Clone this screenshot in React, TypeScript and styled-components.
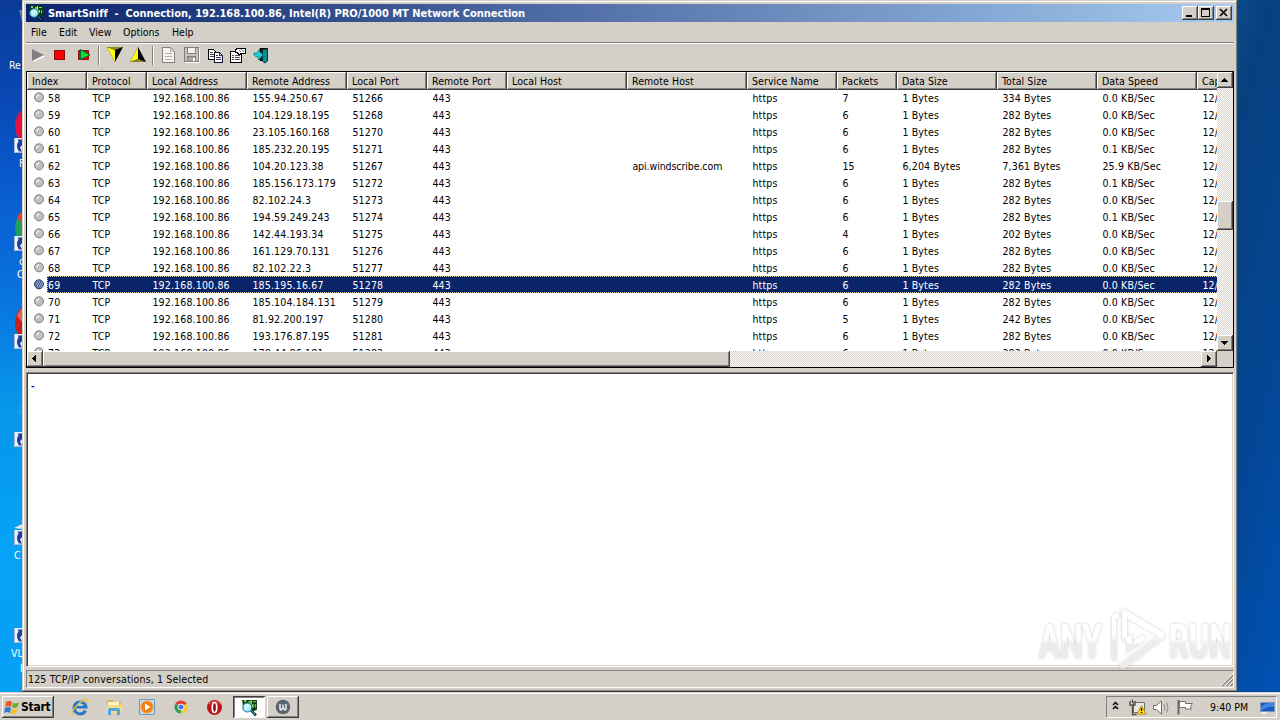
import * as React from 'react';
import styled, { createGlobalStyle, css } from 'styled-components';

const face = '#d4d0c8';
const dark = '#404040';
const shadow = '#808080';

const GlobalStyle = createGlobalStyle`
  * {
    box-sizing: border-box;
  }
  body {
    margin: 0;
    overflow: hidden;
    font-family: 'DejaVu Sans Condensed', 'DejaVu Sans', sans-serif;
    font-stretch: condensed;
    font-size: 10.5px;
    color: #000;
  }
  svg {
    display: block;
    flex: none;
  }
`;

const raised = css`
  background: ${face};
  box-shadow: inset -1px -1px ${dark}, inset 1px 1px #fff, inset -2px -2px ${shadow};
`;

const Screen = styled.div`
  display: flex;
  flex-direction: column;
  width: 1280px;
  height: 720px;
  overflow: hidden;
`;

const Desktop = styled.div`
  display: flex;
  height: 692px;
`;

const LeftStrip = styled.div`
  position: relative;
  width: 22px;
  overflow: hidden;
  background: linear-gradient(#0a3b98, #0a48b4 14%, #0858cc 25%, #0872de 42%, #0795ea 58%, #05a2f6 78%, #06a0f6);
`;

const RightStrip = styled.div`
  flex: 1;
  background: linear-gradient(105deg, #0c4a88, #07407f 14%, #044592 55%, #0052b6);
`;

const DesktopLabel = styled.span<{ $x: number; $y: number }>`
  position: absolute;
  left: ${(p) => p.$x}px;
  top: ${(p) => p.$y}px;
  line-height: 12px;
  color: #fff;
  white-space: nowrap;
`;

const DesktopArt = styled.svg`
  position: absolute;
  left: 0;
  top: 0;
`;

const Window = styled.div`
  display: flex;
  flex-direction: column;
  width: 1216px;
  height: 692px;
  padding: 4px;
  background: ${face};
  box-shadow: inset -1px -1px ${dark}, inset 1px 1px ${face}, inset -2px -2px ${shadow}, inset 2px 2px #fff;
`;

const TitleBar = styled.div`
  display: flex;
  align-items: center;
  height: 18px;
  padding: 0 2px;
  background: linear-gradient(90deg, #0a246a, #a6caf0);
  color: #fff;
`;

const Title = styled.div`
  flex: 1;
  padding-left: 4px;
  font-size: 11px;
  font-weight: bold;
  white-space: pre;
  letter-spacing: -0.02px;
`;

const CaptionButton = styled.div<{ $gap?: boolean }>`
  width: 16px;
  height: 14px;
  margin-left: ${(p) => (p.$gap ? 2 : 0)}px;
  ${raised}
`;

const MenuBar = styled.div`
  display: flex;
  align-items: center;
  height: 21px;
  border-bottom: 1px solid ${shadow};
`;

const MenuItem = styled.div<{ $width: number }>`
  width: ${(p) => p.$width}px;
  padding-left: 5px;
`;

const ToolBar = styled.div`
  display: flex;
  height: 28px;
  padding-top: 2px;
  border-top: 1px solid #fff;
`;

const Tool = styled.div`
  display: flex;
  justify-content: center;
  width: 23px;
  height: 20px;
  margin-right: 0.4px;
`;

const ToolSeparator = styled.div`
  width: 2px;
  height: 19px;
  margin: 0 3px 0 2px;
  border-left: 1px solid ${shadow};
  border-right: 1px solid #fff;
`;

const ListFrame = styled.div`
  display: grid;
  grid-template-columns: 1190px 16px;
  grid-template-rows: 279px 16px;
  height: 297px;
  border: 1px solid #000;
`;

const ListBody = styled.div`
  overflow: hidden;
  background: #fff;
`;

const columnWidths = '60px 60px 100px 100px 80px 80px 120px 120px 90px 60px 100px 100px 100px 100px';

const HeaderRow = styled.div`
  display: grid;
  grid-template-columns: ${columnWidths};
  width: 1270px;
  height: 17px;
`;

const HeaderCell = styled.div`
  padding-left: 5px;
  line-height: 18px;
  letter-spacing: 0.08px;
  white-space: nowrap;
  ${raised}
`;

const Row = styled.div<{ $selected: boolean }>`
  position: relative;
  display: grid;
  grid-template-columns: ${columnWidths};
  width: 1270px;
  height: 17px;
  line-height: 19px;
  letter-spacing: 0.16px;
  ${(p) =>
    p.$selected &&
    css`
      color: #fff;
      background: linear-gradient(90deg, #fff 20px, #0a246a 20px);
      &::after {
        content: '';
        position: absolute;
        inset: 0 0 0 20px;
        border: 1px dotted #d8cfa0;
      }
    `}
`;

const Cell = styled.div<{ $tight?: boolean }>`
  padding-left: 5.4px;
  white-space: nowrap;
  letter-spacing: ${(p) => (p.$tight ? '-0.08px' : 'inherit')};
`;

const IndexCell = styled.div`
  display: flex;
  gap: 4px;
  padding-left: 6px;
`;

const Track = styled.div<{ $vertical?: boolean }>`
  display: flex;
  flex-direction: ${(p) => (p.$vertical ? 'column' : 'row')};
  background: repeating-conic-gradient(#fff 0 25%, ${face} 0 50%) 0 0 / 2px 2px;
`;

const ArrowButton = styled.div`
  flex: none;
  width: 16px;
  height: 16px;
  ${raised}
`;

const Gap = styled.div<{ $size: number }>`
  flex: 0 0 ${(p) => p.$size}px;
`;

const Thumb = styled.div<{ $size: number }>`
  flex: 0 0 ${(p) => p.$size}px;
  ${raised}
`;

const Corner = styled.div`
  background: ${face};
`;

const TextPane = styled.div`
  position: relative;
  height: 295px;
  margin-top: 4px;
  padding: 6px 0 0 4px;
  border: 1px solid;
  border-color: ${shadow} #fff #fff ${shadow};
  background: #fff;
  box-shadow: inset 1px 1px ${dark}, inset -1px -1px ${face};
  color: #0000c8;
  font: bold 11px/13px 'Liberation Sans', sans-serif;
`;

const Watermark = styled.svg`
  position: absolute;
  right: 0;
  top: 230px;
`;

const StatusBar = styled.div`
  display: flex;
  align-items: center;
  justify-content: space-between;
  height: 18px;
  margin-top: 3px;
  padding-left: 1px;
  letter-spacing: 0.15px;
  border: 1px solid;
  border-color: ${shadow} #fff #fff ${shadow};
`;

const TaskBar = styled.div`
  display: flex;
  align-items: center;
  height: 28px;
  padding: 2px 3px 0 2px;
  background: ${face};
  box-shadow: inset 0 1px ${face}, inset 0 2px #fff;
`;

const StartButton = styled.div`
  display: flex;
  align-items: center;
  gap: 1px;
  width: 52px;
  height: 22px;
  padding-left: 2px;
  font-size: 12px;
  font-weight: bold;
  letter-spacing: -0.25px;
  ${raised}
`;

const QuickLaunch = styled.div`
  display: flex;
  gap: 13.7px;
  width: 179px;
  padding-left: 16px;
`;

const TaskButton = styled.div<{ $active?: boolean }>`
  display: flex;
  align-items: center;
  justify-content: center;
  width: 32px;
  height: 22px;
  margin-right: 2px;
  ${raised}
  ${(p) =>
    p.$active &&
    css`
      background: #fff;
      box-shadow: inset 1px 1px ${dark}, inset -1px -1px #fff, inset 2px 2px ${shadow};
    `}
`;

const Tray = styled.div`
  display: flex;
  align-items: center;
  width: 171px;
  height: 22px;
  margin-left: auto;
  border: 1px solid;
  border-color: ${shadow} #fff #fff ${shadow};
`;

const TrayIcons = styled.svg`
  width: 92px;
  height: 20px;
`;

const Clock = styled.div`
  width: 49px;
  margin-left: 11px;
  font-size: 10.5px;
  white-space: nowrap;
`;

const headers = [
  'Index', 'Protocol', 'Local Address', 'Remote Address', 'Local Port', 'Remote Port', 'Local Host',
  'Remote Host', 'Service Name', 'Packets', 'Data Size', 'Total Size', 'Data Speed', 'Capture Time',
];

interface Conversation {
  index: number;
  remote: string;
  port: number;
  host?: string;
  packets: number;
  data?: string;
  total: string;
  speed: string;
}

const conversations: Conversation[] = [
  { index: 58, remote: '155.94.250.67', port: 51266, packets: 7, total: '334', speed: '0.0' },
  { index: 59, remote: '104.129.18.195', port: 51268, packets: 6, total: '282', speed: '0.0' },
  { index: 60, remote: '23.105.160.168', port: 51270, packets: 6, total: '282', speed: '0.0' },
  { index: 61, remote: '185.232.20.195', port: 51271, packets: 6, total: '282', speed: '0.1' },
  {
    index: 62, remote: '104.20.123.38', port: 51267, host: 'api.windscribe.com',
    packets: 15, data: '6,204', total: '7,361', speed: '25.9',
  },
  { index: 63, remote: '185.156.173.179', port: 51272, packets: 6, total: '282', speed: '0.1' },
  { index: 64, remote: '82.102.24.3', port: 51273, packets: 6, total: '282', speed: '0.0' },
  { index: 65, remote: '194.59.249.243', port: 51274, packets: 6, total: '282', speed: '0.1' },
  { index: 66, remote: '142.44.193.34', port: 51275, packets: 4, total: '202', speed: '0.0' },
  { index: 67, remote: '161.129.70.131', port: 51276, packets: 6, total: '282', speed: '0.0' },
  { index: 68, remote: '82.102.22.3', port: 51277, packets: 6, total: '282', speed: '0.0' },
  { index: 69, remote: '185.195.16.67', port: 51278, packets: 6, total: '282', speed: '0.0' },
  { index: 70, remote: '185.104.184.131', port: 51279, packets: 6, total: '282', speed: '0.0' },
  { index: 71, remote: '81.92.200.197', port: 51280, packets: 5, total: '242', speed: '0.0' },
  { index: 72, remote: '193.176.87.195', port: 51281, packets: 6, total: '282', speed: '0.0' },
  { index: 73, remote: '178.44.86.181', port: 51282, packets: 6, total: '282', speed: '0.0' },
];

function Arrow({ d }: { d: string }) {
  return (
    <ArrowButton>
      <svg width="16" height="16" shapeRendering="crispEdges">
        <path d={d} fill="#000" />
      </svg>
    </ArrowButton>
  );
}

function Bullet({ selected }: { selected: boolean }) {
  return (
    <svg width="11" height="17" viewBox="0 0 11 17">
      <circle cx="6" cy="8.300" r="4.500" fill={selected ? '#8c9cc0' : '#c0c0c0'} stroke={selected ? '#26386c' : '#808080'} />
      {selected ? (
        <path
          d="M3 6h6M2 8h8M3 10h6M4 12h4"
          fill="none"
          stroke="#142c6e"
          strokeDasharray="1 1"
        />
      ) : (
        <path d="M3.500 8.300L6 5.500" stroke="#ececec" strokeWidth="1.500" />
      )}
    </svg>
  );
}

function SniffIcon({ size = 16 }: { size?: number }) {
  return (
    <svg width={size} height={size} viewBox="0 0 16 16">
      <path d="M1 1h14v9l-2 1H9L2 8z" fill="#0a3c14" />
      <path d="M3 1h2v2H3zM7 2h2v2H7zM11 2h3v1h-3zM10 5h2v3h-2zM13 5h1v3h-1z" fill="#7ce04c" />
      <path d="M9 1h1v4H9z" fill="#e8e070" />
      <path d="M9.500 10.500l4.500 5" stroke="#000" strokeWidth="2.400" />
      <path d="M9.800 10.800l3.700 4.200" stroke="#40b8d0" strokeWidth="1" />
      <circle cx="6" cy="8" r="4.300" fill="#a8eefa" stroke="#16748c" />
      <path d="M3.800 7l3-2M4 9.500l4-3" stroke="#fff" />
    </svg>
  );
}

function ShortcutBadge({ y }: { y: number }) {
  return (
    <g transform={`translate(14 ${y})`}>
      <path d="M0 0h14v15H0z" fill="#e9f1fa" />
      <path d="M.5 0v14.500H8" fill="none" stroke="#a9b8cc" />
      <path d="M8 1.500H3.500l1.200 1.800C2.400 6 2.500 10 5 13.500h3L6 9.500 8 7z" fill="#1c3f9c" />
    </g>
  );
}

function DesktopIcons() {
  return (
    <LeftStrip>
      <DesktopArt width="22" height="692">
        <path d="M19 10h3v12z" fill="#8a9ab4" opacity=".7" />
        <ellipse cx="31" cy="126" rx="16" ry="19" fill="#e8103c" />
        <ellipse cx="31" cy="228" rx="16" ry="17" fill="#24a05a" />
        <path d="M17 218q2-5 5-7v11z" fill="#e04030" />
        <ellipse cx="31" cy="323" rx="16" ry="19" fill="#c8201c" />
        <path d="M17 316q2-5 5-8v14z" fill="#e86050" />
        <path d="M16 414q3-8 6-10v10z" fill="#1eb4ee" opacity=".3" />
        <path d="M14 528l8-4v5z" fill="#e6e6e6" />
        {[138, 236, 334, 432, 530, 628].map((y) => (
          <ShortcutBadge key={y} y={y} />
        ))}
      </DesktopArt>
      <DesktopLabel $x={9} $y={59}>Re</DesktopLabel>
      <DesktopLabel $x={19} $y={157}>F</DesktopLabel>
      <DesktopLabel $x={19} $y={255}>c</DesktopLabel>
      <DesktopLabel $x={17} $y={268}>C</DesktopLabel>
      <DesktopLabel $x={14} $y={549}>C</DesktopLabel>
      <DesktopLabel $x={11} $y={647}>VL</DesktopLabel>
      <DesktopLabel $x={20} $y={662}>l</DesktopLabel>
    </LeftStrip>
  );
}

function Tools() {
  return (
    <ToolBar>
      <Tool>
        <svg width="18" height="18">
          <path d="M4 4l12 6.500L4 16z" fill="#fff" />
          <path d="M3 3l12 6-12 6z" fill="#808080" />
        </svg>
      </Tool>
      <Tool>
        <svg width="18" height="18" shapeRendering="crispEdges">
          <path d="M2.500 4.500h10v9h-10z" fill="#f00" stroke="#8c1010" />
        </svg>
      </Tool>
      <Tool>
        <svg width="18" height="18">
          <path d="M3.500 4.500h10v9h-10z" fill="#e00" stroke="#8c1010" />
          <path d="M5.500 3.500l9.500 5.500-9.500 4.500z" fill="#10e030" stroke="#063" />
        </svg>
      </Tool>
      <ToolSeparator />
      <Tool>
        <svg width="20" height="18">
          <path d="M2 1h16l-8 15z" fill="#000" />
          <path d="M2 1l8 3v12z" fill="#ff0" />
          <path d="M2 1h16l-8 3z" fill="#8a8a20" />
        </svg>
      </Tool>
      <Tool>
        <svg width="20" height="18">
          <path d="M2 16h16L10 1z" fill="#000" />
          <path d="M10 1v12l-8 3z" fill="#ff0" />
          <path d="M2 16h16l-8-3z" fill="#8a8a20" />
        </svg>
      </Tool>
      <ToolSeparator />
      <Tool>
        <svg width="16" height="18" shapeRendering="crispEdges">
          <path d="M2.500 1.500h8l4 4v11h-12z" fill="#f6f4f0" stroke="#808080" />
          <path d="M10.500 1.500v4h4M5 7.500h7M5 10.500h7M5 13.500h7" fill="none" stroke="#b4b0a8" />
        </svg>
      </Tool>
      <Tool>
        <svg width="17" height="18" shapeRendering="crispEdges">
          <path d="M1.500 1.500h14v14h-14z" fill="#c8c4bc" stroke="#808080" />
          <path d="M4.500 1.500h8v6h-8z" fill="#f4f2ee" stroke="#808080" />
          <path d="M4.500 10.500h8v5h-8z" fill="#aaa69e" stroke="#808080" />
          <path d="M10 12h2v3h-2z" fill="#fff" />
          <path d="M2 16.500h14.500V2" fill="none" stroke="#fff" />
        </svg>
      </Tool>
      <Tool>
        <svg width="17" height="18" shapeRendering="crispEdges">
          <path d="M1.500 3.500h5l3 3v7h-8z" fill="#fff" stroke="#000" />
          <path d="M3 6.500h3M3 8.500h4M3 10.500h4" stroke="#404040" />
          <path d="M7.500 6.500h5l3 3v7h-8z" fill="#fff" stroke="#101030" />
          <path d="M12.500 6.500v3h3M9 9.500h2M9 11.500h5M9 13.500h5" fill="none" stroke="#303050" />
        </svg>
      </Tool>
      <Tool>
        <svg width="17" height="18" shapeRendering="crispEdges">
          <path d="M.5 5.500h11v11h-11z" fill="#fff" stroke="#000" />
          <path d="M2 9.500h2M5 9.500h5M2 11.500h2M5 11.500h5M2 13.500h2M5 13.500h5" stroke="#505050" />
          <path d="M5 6V4l3-2h7v5h-3l-3 2-2-3z" fill="#fff" stroke="#000" />
          <path d="M11 3l3 3M9 4l2 2" stroke="#808080" />
        </svg>
      </Tool>
      <Tool>
        <svg width="18" height="18">
          <path d="M7 2.500h7.500v12H7z" fill="#202020" stroke="#000" />
          <path d="M9.500 4l5-1v12l-2.500 2-2.500-2z" fill="#108c90" stroke="#033" />
          <path d="M1 7h4V4l5 5-5 5v-3.500H2.500L1 9z" fill="#20d0d0" stroke="#067" strokeWidth=".6" />
        </svg>
      </Tool>
    </ToolBar>
  );
}

function AnyRun() {
  return (
    <Watermark width="200" height="72" viewBox="0 0 200 72">
      <defs>
        <linearGradient id="fade" x1="0" y1="0" x2="0" y2="1">
          <stop offset="0.45" stopColor="#fff" />
          <stop offset="0.55" stopColor="#ececec" />
        </linearGradient>
        <filter id="soft" x="-10%" y="-10%" width="120%" height="120%">
          <feDropShadow dx="0" dy="0" stdDeviation="1.600" floodColor="#000" floodOpacity=".24" />
        </filter>
      </defs>
      <g filter="url(#soft)" fill="url(#fade)" fontFamily="Roboto, sans-serif" fontSize="48">
        <text x="6" y="55" textLength="63" lengthAdjust="spacingAndGlyphs">ANY</text>
        <text x="136" y="55" textLength="62" lengthAdjust="spacingAndGlyphs">RUN</text>
        <path
          d="M79 13l7-4v5l-3 2v42l-4-2zM89 5l42 25v5L92 65a3 3 0 1 1-3-5l36-27-31-18v24l-5-2z"
          fillRule="evenodd"
        />
        <path d="M94 34v16l20-15-5-3-10 8v-9z" />
      </g>
    </Watermark>
  );
}

function Launchers() {
  return (
    <QuickLaunch>
      <svg width="20" height="20" viewBox="0 0 20 20">
        <path d="M15.500 13.500A6 6 0 1 1 16 10H6" fill="none" stroke="#2878c8" strokeWidth="3" />
        <path d="M7 8.500h6" stroke="#8ad4f8" />
        <path d="M2.500 18C0 14 11 2.500 17 2.500c2 0 1 3 0 4" fill="none" stroke="#ecc040" strokeWidth="1.300" />
      </svg>
      <svg width="20" height="20" viewBox="0 0 20 20">
        <path d="M3 3h6l1 2h7v11H3z" fill="#e0b84c" />
        <path d="M4 5h11v4H4z" fill="#fff6c0" />
        <path d="M3 8h15v8H3z" fill="#f4dc84" />
        <path d="M4 18v-5q0-2 2-2h8q2 0 2 2v5h-3v-4H7v4z" fill="#50a8dc" />
      </svg>
      <svg width="20" height="20" viewBox="0 0 20 20">
        <path d="M2.500 2.500h15v15h-15z" fill="#c4dcf0" stroke="#6a9cc8" />
        <circle cx="10" cy="10" r="6.300" fill="#f08010" stroke="#f8b860" />
        <path d="M8 6.500l5.500 3.500L8 13.500z" fill="#fff" />
      </svg>
      <svg width="20" height="20" viewBox="0 0 20 20">
        <path d="M10 10L4.370 6.750A6.500 6.500 0 0 1 15.630 6.750z" fill="#e04030" />
        <path d="M10 10L4.370 6.750A6.500 6.500 0 0 0 10 16.500z" fill="#30a050" />
        <path d="M10 10V16.500A6.500 6.500 0 0 0 15.630 6.750z" fill="#f8cc30" />
        <circle cx="10" cy="10" r="3.300" fill="#fff" />
        <circle cx="10" cy="10" r="2.500" fill="#3c78e0" />
      </svg>
      <svg width="20" height="20" viewBox="0 0 20 20">
        <circle cx="9.500" cy="10.500" r="7.500" fill="#c01418" />
        <path d="M4 7q6-5 11 0" stroke="#e86a60" fill="none" />
        <ellipse cx="9.500" cy="10.500" rx="2.200" ry="5" fill="#901010" stroke="#fff" strokeWidth="1.700" />
      </svg>
    </QuickLaunch>
  );
}

function App() {
  return (
    <Screen>
      <GlobalStyle />
      <Desktop>
        <DesktopIcons />
        <Window>
          <TitleBar>
            <SniffIcon />
            <Title>SmartSniff  -  Connection, 192.168.100.86, Intel(R) PRO/1000 MT Network Connection</Title>
            <CaptionButton>
              <svg width="16" height="14"><path d="M4 9h6v2H4z" /></svg>
            </CaptionButton>
            <CaptionButton>
              <svg width="16" height="14"><path d="M3 2h9v9H3zM4 4v6h7V4z" fillRule="evenodd" /></svg>
            </CaptionButton>
            <CaptionButton $gap>
              <svg width="16" height="14"><path d="M4 3l7 7M11 3l-7 7" stroke="#000" strokeWidth="1.600" /></svg>
            </CaptionButton>
          </TitleBar>
          <MenuBar>
            <MenuItem $width={28}>File</MenuItem>
            <MenuItem $width={30}>Edit</MenuItem>
            <MenuItem $width={34}>View</MenuItem>
            <MenuItem $width={49}>Options</MenuItem>
            <MenuItem $width={40}>Help</MenuItem>
          </MenuBar>
          <Tools />
          <ListFrame>
            <ListBody>
              <HeaderRow>
                {headers.map((h) => (
                  <HeaderCell key={h}>{h}</HeaderCell>
                ))}
              </HeaderRow>
              {conversations.map((c) => (
                <Row key={c.index} $selected={c.index === 69}>
                  <IndexCell>
                    <Bullet selected={c.index === 69} />
                    {c.index}
                  </IndexCell>
                  <Cell>TCP</Cell>
                  <Cell>192.168.100.86</Cell>
                  <Cell>{c.remote}</Cell>
                  <Cell>{c.port}</Cell>
                  <Cell>443</Cell>
                  <Cell />
                  <Cell $tight>{c.host}</Cell>
                  <Cell>https</Cell>
                  <Cell>{c.packets}</Cell>
                  <Cell>{c.data || '1'} Bytes</Cell>
                  <Cell>{c.total} Bytes</Cell>
                  <Cell>{c.speed} KB/Sec</Cell>
                  <Cell>12/</Cell>
                </Row>
              ))}
            </ListBody>
            <Track $vertical>
              <Arrow d="M7 6h1v1h1v1h1v1h1v1H4V9h1V8h1V7h1z" />
              <Gap $size={113} />
              <Thumb $size={29} />
              <Gap $size={105} />
              <Arrow d="M4 6h7v1h-1v1H9v1H8v1H7V9H6V8H5V7H4z" />
            </Track>
            <Track>
              <Arrow d="M9 4v7H8v-1H7V9H6V8H5V7h1V6h1V5h1V4z" />
              <Thumb $size={687} />
              <Gap $size={471} />
              <Arrow d="M6 4h1v1h1v1h1v1h1v1H9v1H8v1H7v1H6z" />
            </Track>
            <Corner />
          </ListFrame>
          <TextPane>
            -
            <AnyRun />
          </TextPane>
          <StatusBar>
            125 TCP/IP conversations, 1 Selected
            <svg width="13" height="15">
              <path d="M2 14L13 3M6 14l7-7M10 14l3-3" stroke="#808080" strokeWidth="1.600" />
              <path d="M1 14L13 2M5 14l8-8M9 14l4-4" stroke="#fff" strokeWidth=".8" />
            </svg>
          </StatusBar>
        </Window>
        <RightStrip />
      </Desktop>
      <TaskBar>
        <StartButton>
          <svg width="16" height="16" viewBox="0 0 16 16">
            <path d="M2 3q3-2 6 0L7 8Q4 6 1 8z" fill="#e85a20" />
            <path d="M9 3.500q3 2 6-.5l-1.500 5q-3 2-5.500 0z" fill="#68b030" />
            <path d="M1 9q3-2 6 0l-1 5q-3-2-6 0z" fill="#3078d0" />
            <path d="M8 9.500q3 2 5.500 0L12 14q-3 2-5 0z" fill="#f8c020" />
          </svg>
          Start
        </StartButton>
        <Launchers />
        <TaskButton $active>
          <SniffIcon size={17} />
        </TaskButton>
        <TaskButton>
          <svg width="16" height="16" viewBox="0 0 16 16">
            <circle cx="8" cy="8" r="7.300" fill="#5c6670" />
            <path d="M5 5v5l1 1 2-2 2 2 1-1V5M8 5.500V9" fill="none" stroke="#f0f2f4" strokeWidth="1.500" />
          </svg>
        </TaskButton>
        <Tray>
          <TrayIcons viewBox="0 0 92 20">
            <path d="M6 8l2.500-2.500L11 8M6 12l2.500-2.500L11 12" fill="none" stroke="#000" strokeWidth="1.500" />
            <path d="M26.500 5.500h11v10h-11z" fill="#e8e6e0" stroke="#707070" />
            <path d="M23 4v4h5V4M25.500 8v9.500h4M25.500 2.500V6" fill="none" stroke="#505050" strokeWidth="1.400" />
            <path d="M34.500 8.500l4.500 8.500h-9z" fill="#fce020" stroke="#c09010" />
            <path d="M34.500 11v3M34.500 15v1" stroke="#000" strokeWidth="1.300" />
            <path d="M46.500 8.500h3l5-4.500v13l-5-4.500h-3z" fill="#fff" stroke="#707070" />
            <path d="M57 7.500q2 3 0 6M59.500 5.500q3 5 0 10" fill="none" stroke="#888" />
            <path d="M71.500 3v14.500" stroke="#666" strokeWidth="2" />
            <path d="M72.500 4.500h6v2h7l-2 3 1 2.500h-6v-1.500h-6z" fill="#fff" stroke="#707070" />
          </TrayIcons>
          <Clock>9:40 PM</Clock>
          <svg width="17" height="16" viewBox="0 0 17 16">
            <path d="M1.500 3.500h14v9h-14z" fill="#1858c0" stroke="#8098b8" />
            <path d="M2 8q6-5 13-4v4q-6-1-13 4z" fill="#3c88e0" />
            <path d="M2 13h6v2H2z" fill="#e8eef8" />
          </svg>
        </Tray>
      </TaskBar>
    </Screen>
  );
}

export default App;
